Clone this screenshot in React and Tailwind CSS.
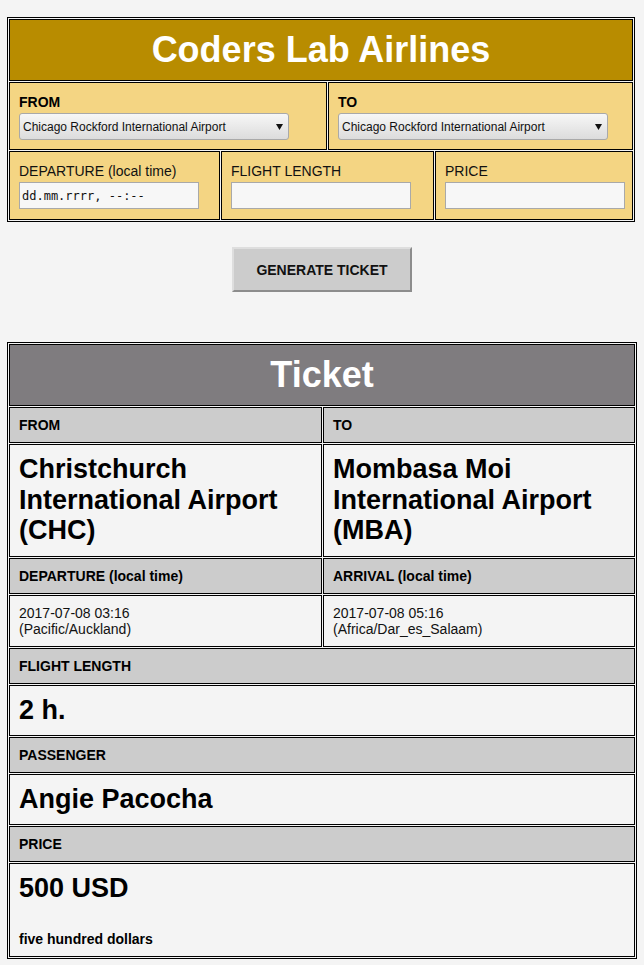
import React from "react";

const SelectBox = ({ value }) => (
  <div className="h-[27px] w-[270px] flex items-center justify-between border border-[#a9a9a9] rounded-[3px] bg-gradient-to-b from-[#f7f7f7] to-[#dcdcdc] pl-[3px] pr-[5px] text-[12px] text-[#111]">
    <span>{value}</span>
    <svg width="7" height="6" viewBox="0 0 7 6">
      <path d="M0 0 L7 0 L3.5 6 Z" fill="#111" />
    </svg>
  </div>
);

const TextBox = ({ value, mono }) => (
  <div
    className={`h-[27px] w-[180px] flex items-center border border-[#a9a9a9] bg-[#f7f7f7] px-[2px] text-[12px] text-[#111] ${
      mono ? "font-['DejaVu_Sans_Mono',monospace]" : ""
    }`}
  >
    {value}
  </div>
);

const Label = ({ children }) => (
  <div className="h-[36px] flex items-center border border-black bg-[#cccccc] px-[9px] text-[14px] leading-[16px] font-bold">
    {children}
  </div>
);

const Value = ({ children, h }) => (
  <div className={`${h} border border-black bg-[#f4f4f4] px-[9px] pt-[9px] text-[27px] leading-[30.5px] font-bold`}>
    {children}
  </div>
);

const App = () => {
  return (
    <div className="min-h-screen bg-[#f4f4f4] pt-[17px] pb-[6px] text-black font-['Liberation_Sans',Arial,sans-serif]">
      {/* Booking form */}
      <div className="ml-[7px] w-[628px] flex flex-col gap-px border border-black p-px">
        <div className="h-[62px] border border-black bg-[#b88c00] pt-[9px] text-center text-[36px] leading-[41px] font-bold text-white">
          Coders Lab Airlines
        </div>
        <div className="grid grid-cols-[318px_305px] gap-px">
          <div className="h-[68px] border border-black bg-[#f4d583] px-[9px] pt-[9px]">
            <div className="h-[21px] text-[14px] leading-[20px] font-bold">FROM</div>
            <SelectBox value="Chicago Rockford International Airport" />
          </div>
          <div className="h-[68px] border border-black bg-[#f4d583] px-[9px] pt-[9px]">
            <div className="h-[21px] text-[14px] leading-[20px] font-bold">TO</div>
            <SelectBox value="Chicago Rockford International Airport" />
          </div>
        </div>
        <div className="grid grid-cols-[211px_213px_198px] gap-px">
          <div className="h-[69px] border border-black bg-[#f4d583] px-[9px] pt-[9px]">
            <div className="h-[21px] text-[14px] leading-[20px] text-[#111]">DEPARTURE (local time)</div>
            <TextBox value="dd.mm.rrrr, --:--" mono />
          </div>
          <div className="h-[69px] border border-black bg-[#f4d583] px-[9px] pt-[9px]">
            <div className="h-[21px] text-[14px] leading-[20px] text-[#111]">FLIGHT LENGTH</div>
            <TextBox value="" />
          </div>
          <div className="h-[69px] border border-black bg-[#f4d583] px-[9px] pt-[9px]">
            <div className="h-[21px] text-[14px] leading-[20px] text-[#111]">PRICE</div>
            <TextBox value="" />
          </div>
        </div>
      </div>

      <button className="mx-auto mt-[25px] block h-[45px] w-[180px] border-2 border-t-[#dedede] border-l-[#dedede] border-r-[#8c8c8c] border-b-[#8c8c8c] bg-[#cccccc] pt-[2px] text-[14px] font-bold text-[#111]">
        GENERATE TICKET
      </button>

      {/* Ticket */}
      <div className="ml-[7px] mt-[50px] w-[630px] flex flex-col gap-px border border-black p-px">
        <div className="h-[62px] border border-black bg-[#7f7c7f] pt-[9px] text-center text-[36px] leading-[41px] font-bold text-white">
          Ticket
        </div>
        <div className="grid grid-cols-[313px_312px] gap-px">
          <Label>FROM</Label>
          <Label>TO</Label>
          <Value h="h-[113px]">Christchurch International Airport (CHC)</Value>
          <Value h="h-[113px]">Mombasa Moi International Airport (MBA)</Value>
          <Label>DEPARTURE (local time)</Label>
          <Label>ARRIVAL (local time)</Label>
          <div className="h-[52px] border border-black bg-[#f4f4f4] px-[9px] pt-[9px] text-[14px] leading-[16px] text-[#111]">
            2017-07-08 03:16
            <br />
            (Pacific/Auckland)
          </div>
          <div className="h-[52px] border border-black bg-[#f4f4f4] px-[9px] pt-[9px] text-[14px] leading-[16px] text-[#111]">
            2017-07-08 05:16
            <br />
            (Africa/Dar_es_Salaam)
          </div>
        </div>
        <Label>FLIGHT LENGTH</Label>
        <Value h="h-[51px]">2 h.</Value>
        <Label>PASSENGER</Label>
        <Value h="h-[51px]">Angie Pacocha</Value>
        <Label>PRICE</Label>
        <Value h="h-[94px]">
          500 USD
          <div className="mt-[27px] text-[14px] leading-[16px]">five hundred dollars</div>
        </Value>
      </div>
    </div>
  );
};

export default App;
